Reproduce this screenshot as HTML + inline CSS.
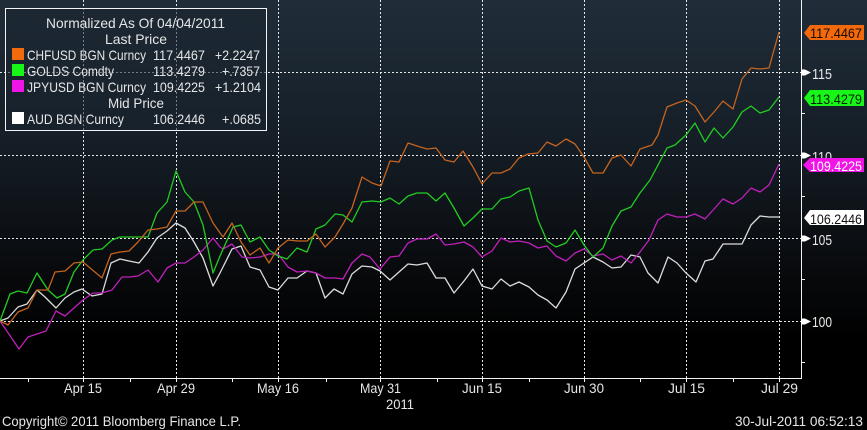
<!DOCTYPE html>
<html>
<head>
<meta charset="utf-8">
<style>
html,body{margin:0;padding:0;background:#000;width:867px;height:430px;overflow:hidden}
svg{display:block}
text{font-family:"Liberation Sans",sans-serif;font-size:14px;fill:#e6e6e6}
</style>
</head>
<body>
<svg width="867" height="430" viewBox="0 0 867 430" xmlns="http://www.w3.org/2000/svg">
<defs>
<linearGradient id="bg" x1="0" y1="0" x2="0" y2="1">
<stop offset="0" stop-color="#202d39"/>
<stop offset=".35" stop-color="#161f28"/>
<stop offset=".7" stop-color="#090b0e"/>
<stop offset=".9" stop-color="#000"/>
</linearGradient>
</defs>
<rect width="867" height="430" fill="#000"/>
<rect width="867" height="378" fill="url(#bg)"/>

<g stroke="#e8e8e8" stroke-width="1" stroke-dasharray="2 2" fill="none">
<path d="M0 72.5H801M0 155.5H801M0 238.5H801M0 321.5H801"/>
<path d="M83.5 0V378M176.5 0V378M278.5 0V378M380.5 0V378M482.5 0V378M584.5 0V378M686.5 0V378M779.5 0V378"/>
</g>

<g fill="none" stroke-width="1.3" stroke-linejoin="round">
<polyline stroke="#dcdcdc" points="0,321 8,318 18,307 27,304 37,290 45,297 56,308 65,298 74,292 82,289 92,296 102,294 111,263 120,259 129,261 139,263 148,252 157,238 167,231 176,223 185,228 194,242 203,258 213,286 220,273 232,249 241,246 250,267 260,270 269,287 278,290 288,278 297,278 307,271 316,273 325,298 334,289 343,294 352,274 362,266 372,267 380,271 390,280 399,272 408,264 417,265 427,263 436,278 445,278 454,293 464,281 473,269 482,286 492,289 501,279 510,286 519,282 529,287 538,295 547,300 556,308 566,292 575,269 584,263 593,257 603,262 612,268 621,267 631,255 640,257 648,273 658,283 668,257 677,263 686,273 696,282 705,261 713,259 723,244 742,244 751,225 760,216 769,217 779,217"/>
<polyline stroke="#c020bc" points="0,321 19,349 28,337 46,331 56,311 65,316 83,300 93,293 102,293 112,290 122,277 129,277 138,276 148,270 158,282 167,268 176,263 185,263 194,257 203,250 213,238 220,247 223,249 232,244 242,257 250,258 260,257 269,254 278,254 288,267 297,272 307,271 316,273 325,278 335,278 343,279 352,263 362,254 370,257 380,269 390,257 399,256 408,243 417,239 427,239 436,234 445,245 454,244 464,242 473,247 482,257 492,251 501,238 510,242 519,241 529,243 538,248 547,246 556,256 566,261 575,253 584,249 593,256 603,254 612,260 621,256 631,263 640,252 649,240 658,220 667,214 677,217 686,217 695,214 705,219 714,209 723,199 733,204 742,198 751,188 760,192 769,185 779,164"/>
<polyline stroke="#22cc22" points="0,321 10,294 18,291 27,293 37,273 48,290 57,298 65,294 74,272 83,260 93,250 102,249 112,240 120,237 129,237 138,237 148,237 157,213 167,202 176,171 185,192 194,202 203,225 213,273 220,256 233,227 241,225 250,242 260,237 269,250 278,256 287,259 297,248 307,252 316,229 325,225 335,214 343,215 352,222 362,202 372,201 381,202 390,198 399,204 408,196 417,193 427,193 436,201 445,193 454,208 464,226 473,218 482,209 492,209 501,199 510,197 519,191 529,188 538,220 547,241 556,247 566,243 575,230 584,245 593,257 603,248 612,226 621,211 631,207 640,193 650,180 658,165 667,148 675,145 686,135 695,123 705,142 714,128 723,138 733,127 742,112 751,106 760,113 769,110 779,97"/>
<polyline stroke="#c4641f" points="0,321 8,325 18,312 28,308 37,290 48,290 55,272 65,271 74,263 83,262 102,278 111,254 120,252 129,251 138,242 148,230 157,229 167,227 176,211 185,211 194,202 203,202 213,223 223,237 232,223 241,242 250,255 260,248 269,263 278,248 288,240 298,241 307,241 316,234 325,247 335,237 343,224 352,208 362,177 372,183 381,186 390,161 399,162 408,143 417,146 427,149 436,148 445,160 454,162 463,151 473,167 482,184 492,173 501,173 510,169 519,158 528,154 538,153 547,142 556,146 566,139 575,144 584,157 593,173 603,173 612,158 621,155 631,166 640,149 652,145 658,135 667,107 677,103 686,100 695,106 705,122 714,112 723,101 733,109 742,79 751,68 760,69 769,68 779,32"/>
</g>

<!-- axes -->
<g stroke="#f2f2f2" stroke-width="1" fill="none">
<path d="M801.5 0V378.5H0"/>
<path d="M801 113.5H805M801 196.5H805M801 279.5H805M801 362.5H805"/>
<path d="M28.5 378V382M130.5 378V382M232.5 378V382M326.5 378V382M437.5 378V382M529.5 378V382M640.5 378V382M733.5 378V382"/>
<path d="M83.5 378V382M176.5 378V382M278.5 378V382M380.5 378V382M482.5 378V382M584.5 378V382M686.5 378V382M779.5 378V382"/>
</g>
<g fill="#fff">
<path d="M801 69.5H805L811 72.5L805 75.5H801Z"/>
<path d="M801 152.5H805L811 155.5L805 158.5H801Z"/>
<path d="M801 235.5H805L811 238.5L805 241.5H801Z"/>
<path d="M801 318.5H805L811 321.5L805 324.5H801Z"/>
</g>
<text x="812" y="79" textLength="20" lengthAdjust="spacingAndGlyphs" style="font-size:15px">115</text>
<text x="812" y="162" textLength="20" lengthAdjust="spacingAndGlyphs" style="font-size:15px">110</text>
<text x="812" y="245" textLength="20" lengthAdjust="spacingAndGlyphs" style="font-size:15px">105</text>
<text x="812" y="327" textLength="20" lengthAdjust="spacingAndGlyphs" style="font-size:15px">100</text>

<!-- tags -->
<path d="M804 33L810 25H864V40H810Z" fill="#f26a0c"/>
<path d="M804 98L810 90H864V106H810Z" fill="#17f617"/>
<path d="M803 165L810 158H864V172H810Z" fill="#f014e6"/>
<path d="M804 218L810 210H864V225H810Z" fill="#ffffff"/>
<text x="810" y="38" textLength="52" lengthAdjust="spacingAndGlyphs" style="fill:#1c0c00">117.4467</text>
<text x="810" y="104" textLength="52" lengthAdjust="spacingAndGlyphs" style="fill:#042004">113.4279</text>
<text x="810" y="171" textLength="52" lengthAdjust="spacingAndGlyphs" style="fill:#fff">109.4225</text>
<text x="810" y="224" textLength="52" lengthAdjust="spacingAndGlyphs" style="fill:#111">106.2446</text>

<!-- legend -->
<rect x="5.5" y="8.5" width="261" height="122" fill="#1a2530" fill-opacity=".55" stroke="#f4f4f4" stroke-width="1"/>
<text x="46" y="28" textLength="179" lengthAdjust="spacingAndGlyphs">Normalized As Of 04/04/2011</text>
<text x="105" y="44" textLength="62" lengthAdjust="spacingAndGlyphs">Last Price</text>
<rect x="12" y="48" width="12" height="12" fill="#f26a0c"/>
<text x="27" y="60" textLength="119" lengthAdjust="spacingAndGlyphs">CHFUSD BGN Curncy</text>
<text x="153" y="60" textLength="52" lengthAdjust="spacingAndGlyphs">117.4467</text>
<text x="215" y="60" textLength="45" lengthAdjust="spacingAndGlyphs">+2.2247</text>
<rect x="12" y="64" width="12" height="12" fill="#17f617"/>
<text x="27" y="76" textLength="87" lengthAdjust="spacingAndGlyphs">GOLDS Comdty</text>
<text x="153" y="76" textLength="52" lengthAdjust="spacingAndGlyphs">113.4279</text>
<text x="222" y="76" textLength="38" lengthAdjust="spacingAndGlyphs">+.7357</text>
<rect x="12" y="80" width="12" height="12" fill="#f014e6"/>
<text x="27" y="92" textLength="119" lengthAdjust="spacingAndGlyphs">JPYUSD BGN Curncy</text>
<text x="153" y="92" textLength="52" lengthAdjust="spacingAndGlyphs">109.4225</text>
<text x="215" y="92" textLength="46" lengthAdjust="spacingAndGlyphs">+1.2104</text>
<text x="108" y="108" textLength="56" lengthAdjust="spacingAndGlyphs">Mid Price</text>
<rect x="12" y="112" width="12" height="12" fill="#fff"/>
<text x="27" y="124" textLength="97" lengthAdjust="spacingAndGlyphs">AUD BGN Curncy</text>
<text x="153" y="124" textLength="52" lengthAdjust="spacingAndGlyphs">106.2446</text>
<text x="222" y="124" textLength="39" lengthAdjust="spacingAndGlyphs">+.0685</text>

<!-- x labels -->
<text x="64" y="393" textLength="38" lengthAdjust="spacingAndGlyphs">Apr 15</text>
<text x="157" y="393" textLength="38" lengthAdjust="spacingAndGlyphs">Apr 29</text>
<text x="257" y="393" textLength="42" lengthAdjust="spacingAndGlyphs">May 16</text>
<text x="360" y="393" textLength="41" lengthAdjust="spacingAndGlyphs">May 31</text>
<text x="462" y="393" textLength="40" lengthAdjust="spacingAndGlyphs">Jun 15</text>
<text x="564" y="393" textLength="40" lengthAdjust="spacingAndGlyphs">Jun 30</text>
<text x="668" y="393" textLength="37" lengthAdjust="spacingAndGlyphs">Jul 15</text>
<text x="761" y="393" textLength="37" lengthAdjust="spacingAndGlyphs">Jul 29</text>
<text x="386" y="409" textLength="28" lengthAdjust="spacingAndGlyphs">2011</text>
<text x="2" y="426" textLength="239" lengthAdjust="spacingAndGlyphs">Copyright© 2011 Bloomberg Finance L.P.</text>
<text x="735" y="426" textLength="128" lengthAdjust="spacingAndGlyphs">30-Jul-2011 06:52:13</text>
</svg>
</body>
</html>
